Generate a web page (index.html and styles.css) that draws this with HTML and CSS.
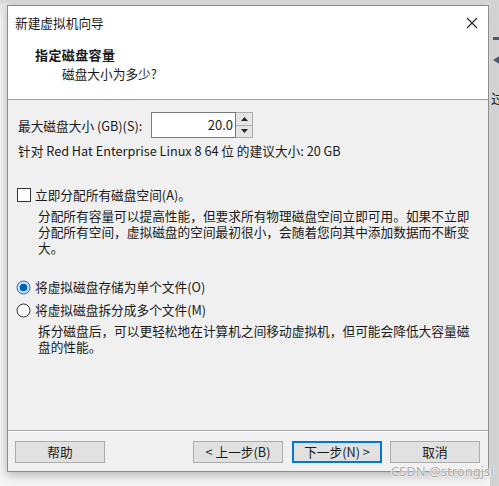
FILE: index.html
```html
<!DOCTYPE html>
<html lang="zh-CN">
<head>
<meta charset="utf-8">
<link rel="stylesheet" href="styles.css">
</head>
<body>
<div class="page">
  <div class="dialog">
    <div class="header">
      <div class="titlebar">
        <span class="title">新建虚拟机向导</span>
        <svg class="close" width="12" height="12" viewBox="0 0 12 12"><path d="M1 1L11 11M11 1L1 11" stroke="#222" stroke-width="1.1" fill="none"/></svg>
      </div>
      <div class="heading">指定磁盘容量</div>
      <div class="subheading">磁盘大小为多少?</div>
    </div>
    <div class="content">
      <div class="size-row">
        <label class="size-label">最大磁盘大小 (GB)(S):</label>
        <div class="spin">
          <div class="spin-value">20.0</div>
          <div class="spin-btns">
            <div class="spin-btn"><svg width="7" height="4" viewBox="0 0 7 4"><path d="M0 4L3.5 0L7 4Z" fill="#222"/></svg></div>
            <div class="spin-btn"><svg width="7" height="4" viewBox="0 0 7 4"><path d="M0 0L7 0L3.5 4Z" fill="#222"/></svg></div>
          </div>
        </div>
      </div>
      <div class="recommend">针对 Red Hat Enterprise Linux 8 64 位 的建议大小: 20 GB</div>

      <div class="option check-opt">
        <span class="checkbox"></span>
        <span>立即分配所有磁盘空间(A)。</span>
      </div>
      <p class="desc">分配所有容量可以提高性能，但要求所有物理磁盘空间立即可用。如果不立即分配所有空间，虚拟磁盘的空间最初很小，会随着您向其中添加数据而不断变大。</p>

      <div class="option radio-opt first">
        <svg class="radio" width="15" height="15" viewBox="0 0 15 15"><circle cx="7.5" cy="7.5" r="6.5" fill="#cce4f7" stroke="#0078d7" stroke-width="1"/><circle cx="7.5" cy="7.5" r="3.8" fill="#005fb8"/></svg>
        <span>将虚拟磁盘存储为单个文件(O)</span>
      </div>
      <div class="option radio-opt">
        <svg class="radio" width="15" height="15" viewBox="0 0 15 15"><circle cx="7.5" cy="7.5" r="6.5" fill="#fff" stroke="#333" stroke-width="1"/></svg>
        <span>将虚拟磁盘拆分成多个文件(M)</span>
      </div>
      <p class="desc">拆分磁盘后，可以更轻松地在计算机之间移动虚拟机，但可能会降低大容量磁盘的性能。</p>
    </div>
    <div class="footer">
      <button class="btn">帮助</button>
      <div class="spacer"></div>
      <button class="btn">&lt; 上一步(B)</button>
      <button class="btn default">下一步(N) &gt;</button>
      <button class="btn">取消</button>
    </div>
  </div>
  <div class="desktop">
    <div class="d-icon a"></div>
    <div class="d-icon b"></div>
    <div class="d-char">过</div>
  </div>
</div>
<div class="watermark">CSDN @strongjsl</div>
</body>
</html>
```
FILE: styles.css
```css
* { box-sizing: border-box; }
html, body { margin: 0; padding: 0; }
body {
  width: 499px;
  height: 486px;
  overflow: hidden;
  background: linear-gradient(#d6d6d6 0, #e9e9e9 6px, #f6f6f6 20px);
  font-family: "Noto Sans CJK SC", "Noto Sans", sans-serif;
  font-size: 12.7px;
  color: #1a1a1a;
  position: relative;
}
.page {
  display: flex;
  padding: 5px 0 0 7px;
  height: 486px;
}
.dialog {
  width: 482px;
  height: 467px;
  border: 1px solid #8c8c8c;
  background: #f0f0f0;
  display: flex;
  flex-direction: column;
  box-shadow: 0 3px 10px rgba(0,0,0,0.28);
}
.header {
  background: #fff;
  height: 94px;
  border-bottom: 1px solid #a0a0a0;
  padding: 0 0 0 7px;
}
.titlebar {
  display: flex;
  align-items: center;
  justify-content: space-between;
  height: 33px;
  padding-right: 10px;
}
.title { line-height: 16px; }
.close { display: block; }
.heading {
  font-weight: bold;
  padding-left: 20px;
  margin-top: 8px;
  line-height: 16px;
  font-size: 13px;
  letter-spacing: 0.4px;
}
.subheading {
  padding-left: 47px;
  margin-top: 3px;
  line-height: 16px;
}
.content {
  flex: 1;
  padding: 12px 10px 0 10px;
  border-bottom: 1px solid #a8a8a8;
}
.size-row {
  display: flex;
  align-items: center;
  height: 26px;
}
.size-label { width: 133px; }
.spin {
  display: flex;
  height: 26px;
  width: 102px;
}
.spin-value {
  width: 85px;
  height: 26px;
  border: 1px solid #7a7a7a;
  background: #fff;
  text-align: right;
  padding-right: 2px;
  font-size: 13px;
  line-height: 24px;
}
.spin-btns {
  width: 17px;
  display: flex;
  flex-direction: column;
  border: 1px solid #adadad;
  border-left: none;
}
.spin-btn {
  flex: 1;
  background: #e5e5e5;
  display: flex;
  align-items: center;
  justify-content: center;
}
.spin-btn + .spin-btn { border-top: 1px solid #adadad; }
.recommend {
  margin-top: 5px;
  line-height: 16px;
}
.option {
  display: flex;
  align-items: center;
  gap: 4px;
  line-height: 16px;
}
.check-opt { margin-top: 28px; margin-left: -1px; }
.checkbox {
  width: 14px;
  height: 14px;
  border: 1px solid #333;
  background: #fff;
  flex: none;
}
.desc {
  margin: 5px 0 0 20px;
  line-height: 16px;
}
.radio { display: block; flex: none; }
.radio-opt { margin-left: -2px; }
.radio-opt.first { margin-top: 23px; }
.radio-opt + .radio-opt { margin-top: 7px; }
.footer {
  height: 40px;
  display: flex;
  align-items: center;
  padding: 0 8px 0 7px;
  gap: 8px;
  border-top: 1px solid #fff;
}
.spacer { flex: 1; }
.btn {
  width: 90px;
  height: 22px;
  border: 1px solid #adadad;
  background: #e1e1e1;
  font-family: inherit;
  font-size: 12.7px;
  color: #1a1a1a;
  padding: 0;
  line-height: 18px;
}
.btn.default {
  border-color: #0078d7;
  box-shadow: inset 0 0 0 1px #0078d7;
  margin-left: 1px;
}
.desktop {
  flex: 1;
  margin-top: -5px;
  margin-left: 1px;
  background: #d2d2d2;
  position: relative;
  overflow: hidden;
}
.d-icon {
  position: absolute;
  left: 3px;
  background: #4d5a6b;
}
.d-icon.a { top: 37px; width: 8px; height: 3px; }
.d-icon.b { top: 55px; width: 8px; height: 10px; clip-path: polygon(100% 0, 0 50%, 100% 100%); }
.d-char {
  position: absolute;
  left: 1px;
  top: 88px;
  font-size: 14px;
  color: #222;
}
.watermark {
  position: absolute;
  left: 391px;
  top: 462px;
  font-family: "Noto Sans", sans-serif;
  font-size: 13px;
  color: #a9a9a9;
  text-shadow: 0 0 1px #fff, 0 0 2px #fff, 0 0 2px #fff;
}
```
